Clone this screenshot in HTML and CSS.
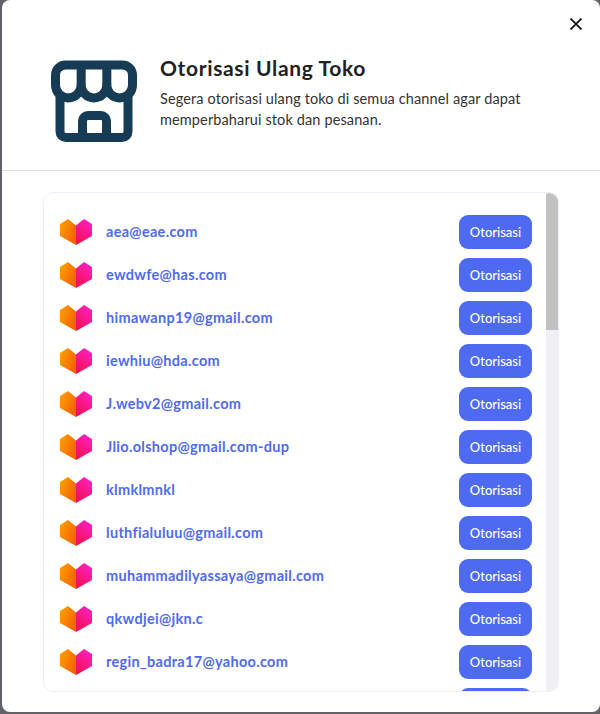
FILE: index.html
```html
<!DOCTYPE html>
<html lang="en">
<head>
  <meta charset="UTF-8" />
  <title>Otorisasi Ulang Toko</title>
  <meta name="viewport" content="width=device-width, initial-scale=1" />
  <link rel="stylesheet" href="styles.css">
</head>
<body>

  <svg class="sprite" width="0" height="0">
    <defs>
      <linearGradient id="heart-left" x1="0" y1="0" x2="1" y2="0.6">
        <stop offset="0" stop-color="#ffa300" />
        <stop offset="1" stop-color="#f56400" />
      </linearGradient>
      <linearGradient id="heart-right" x1="0.8" y1="0" x2="0.2" y2="1">
        <stop offset="0" stop-color="#ff1fc8" />
        <stop offset="1" stop-color="#f2104c" />
      </linearGradient>
      <symbol id="heart" viewBox="0 0 32 26">
        <polygon points="0,5 8,0 16,6.5 16,26 0,17" fill="url(#heart-left)" />
        <polygon points="32,5 24,0 16,6.5 16,26 32,17" fill="url(#heart-right)" />
      </symbol>
    </defs>
  </svg>

  <div class="modal">
    <button class="close-btn" aria-label="Tutup">
      <svg width="14" height="14" viewBox="0 0 14 14">
        <path d="M1.5 1.5 L12.5 12.5 M12.5 1.5 L1.5 12.5" />
      </svg>
    </button>

    <header>
      <svg class="store-icon" width="86" height="82" viewBox="0 0 86 82">
        <path d="M4.5 25 V15 a10 10 0 0 1 10 -10 H71.5 a10 10 0 0 1 10 10 V25 a12.83 13 0 0 1 -25.67 0 a12.83 13 0 0 1 -25.67 0 a12.83 13 0 0 1 -25.66 0 Z" />
        <path d="M30.17 5 V25 M55.83 5 V25" />
        <path d="M9 36 V71.5 a6 6 0 0 0 6 6 H71 a6 6 0 0 0 6 -6 V36" />
        <path d="M31.5 77 V61 a5.5 5.5 0 0 1 5.5 -5.5 H50 a5.5 5.5 0 0 1 5.5 5.5 V77" />
      </svg>
      <div class="intro">
        <h2>Otorisasi Ulang Toko</h2>
        <p>Segera otorisasi ulang toko di semua channel agar dapat memperbaharui stok dan pesanan.</p>
      </div>
    </header>

    <div class="store-card">
      <ul class="store-list">
        <li><svg class="channel"><use href="#heart" /></svg><span class="email">aea@eae.com</span><button>Otorisasi</button></li>
        <li><svg class="channel"><use href="#heart" /></svg><span class="email">ewdwfe@has.com</span><button>Otorisasi</button></li>
        <li><svg class="channel"><use href="#heart" /></svg><span class="email">himawanp19@gmail.com</span><button>Otorisasi</button></li>
        <li><svg class="channel"><use href="#heart" /></svg><span class="email">iewhiu@hda.com</span><button>Otorisasi</button></li>
        <li><svg class="channel"><use href="#heart" /></svg><span class="email">J.webv2@gmail.com</span><button>Otorisasi</button></li>
        <li><svg class="channel"><use href="#heart" /></svg><span class="email">Jlio.olshop@gmail.com-dup</span><button>Otorisasi</button></li>
        <li><svg class="channel"><use href="#heart" /></svg><span class="email">klmklmnkl</span><button>Otorisasi</button></li>
        <li><svg class="channel"><use href="#heart" /></svg><span class="email">luthfialuluu@gmail.com</span><button>Otorisasi</button></li>
        <li><svg class="channel"><use href="#heart" /></svg><span class="email">muhammadilyassaya@gmail.com</span><button>Otorisasi</button></li>
        <li><svg class="channel"><use href="#heart" /></svg><span class="email">qkwdjei@jkn.c</span><button>Otorisasi</button></li>
        <li><svg class="channel"><use href="#heart" /></svg><span class="email">regin_badra17@yahoo.com</span><button>Otorisasi</button></li>
        <li class="cut-off"><button></button></li>
      </ul>
      <div class="scroll-track"><div class="scroll-thumb"></div></div>
    </div>
  </div>

</body>
</html>
```

FILE: styles.css
```css
html, body {
  height: 100%;
}

body {
  margin: 0;
  background: #5f6266;
  font-family: Lato, sans-serif;
  color: #212529;
  overflow: hidden;
}

.sprite {
  display: block;
}

.modal {
  position: relative;
  display: flex;
  flex-direction: column;
  height: 712px;
  margin-left: 2px;
  background: #fff;
  border-radius: 8px;
}

.close-btn {
  position: absolute;
  top: 17px;
  right: 17px;
  width: 14px;
  height: 14px;
  padding: 0;
  background: none;
  border: none;
  cursor: pointer;
}

.close-btn svg {
  display: block;
}

.close-btn path {
  fill: none;
  stroke: #222;
  stroke-width: 1.8;
}

header {
  display: flex;
  gap: 23px;
  height: 110px;
  padding: 60px 0 0 49px;
  border-bottom: 1px solid #e0e2e6;
}

.store-icon {
  flex: none;
}

.store-icon path {
  fill: none;
  stroke: #163b54;
  stroke-width: 9;
  stroke-linejoin: round;
}

.intro {
  width: 390px;
}

h2 {
  margin: -4px 0 8px;
  font-size: 21px;
  line-height: 24px;
  font-weight: 700;
  letter-spacing: 0.65px;
  color: #222;
}

.intro p {
  margin: 0;
  font-size: 14.5px;
  line-height: 21px;
  letter-spacing: 0.12px;
  color: #333;
}

.store-card {
  display: flex;
  width: 514px;
  height: 498px;
  margin: 21px 0 0 41px;
  border: 1px solid #eeeef8;
  border-radius: 10px;
  overflow: hidden;
}

.store-list {
  flex: 1;
  min-width: 0;
  display: flex;
  flex-direction: column;
  gap: 9px;
  margin: 0;
  padding: 22px 14px 0 16px;
  list-style: none;
  overflow: hidden;
}

.store-list li {
  flex: none;
  display: flex;
  align-items: center;
  height: 34px;
}

.cut-off {
  justify-content: flex-end;
}

.channel {
  flex: none;
  width: 32px;
  height: 26px;
  margin-right: 14px;
}

.email {
  flex: 1;
  margin-top: -1px;
  font-size: 14.5px;
  font-weight: 700;
  letter-spacing: 0.3px;
  color: #4f6bed;
}

button {
  font-family: inherit;
}

.store-list button {
  flex: none;
  width: 73px;
  height: 34px;
  padding: 0;
  font-size: 13px;
  font-weight: 500;
  color: #fff;
  background: #4d6af0;
  border: none;
  border-radius: 9px;
  cursor: pointer;
}

.scroll-track {
  flex: none;
  width: 12px;
  background: #f0f0f3;
}

.scroll-thumb {
  height: 137px;
  background: #c1c1c1;
  border-radius: 3px 3px 0 0;
}
```
